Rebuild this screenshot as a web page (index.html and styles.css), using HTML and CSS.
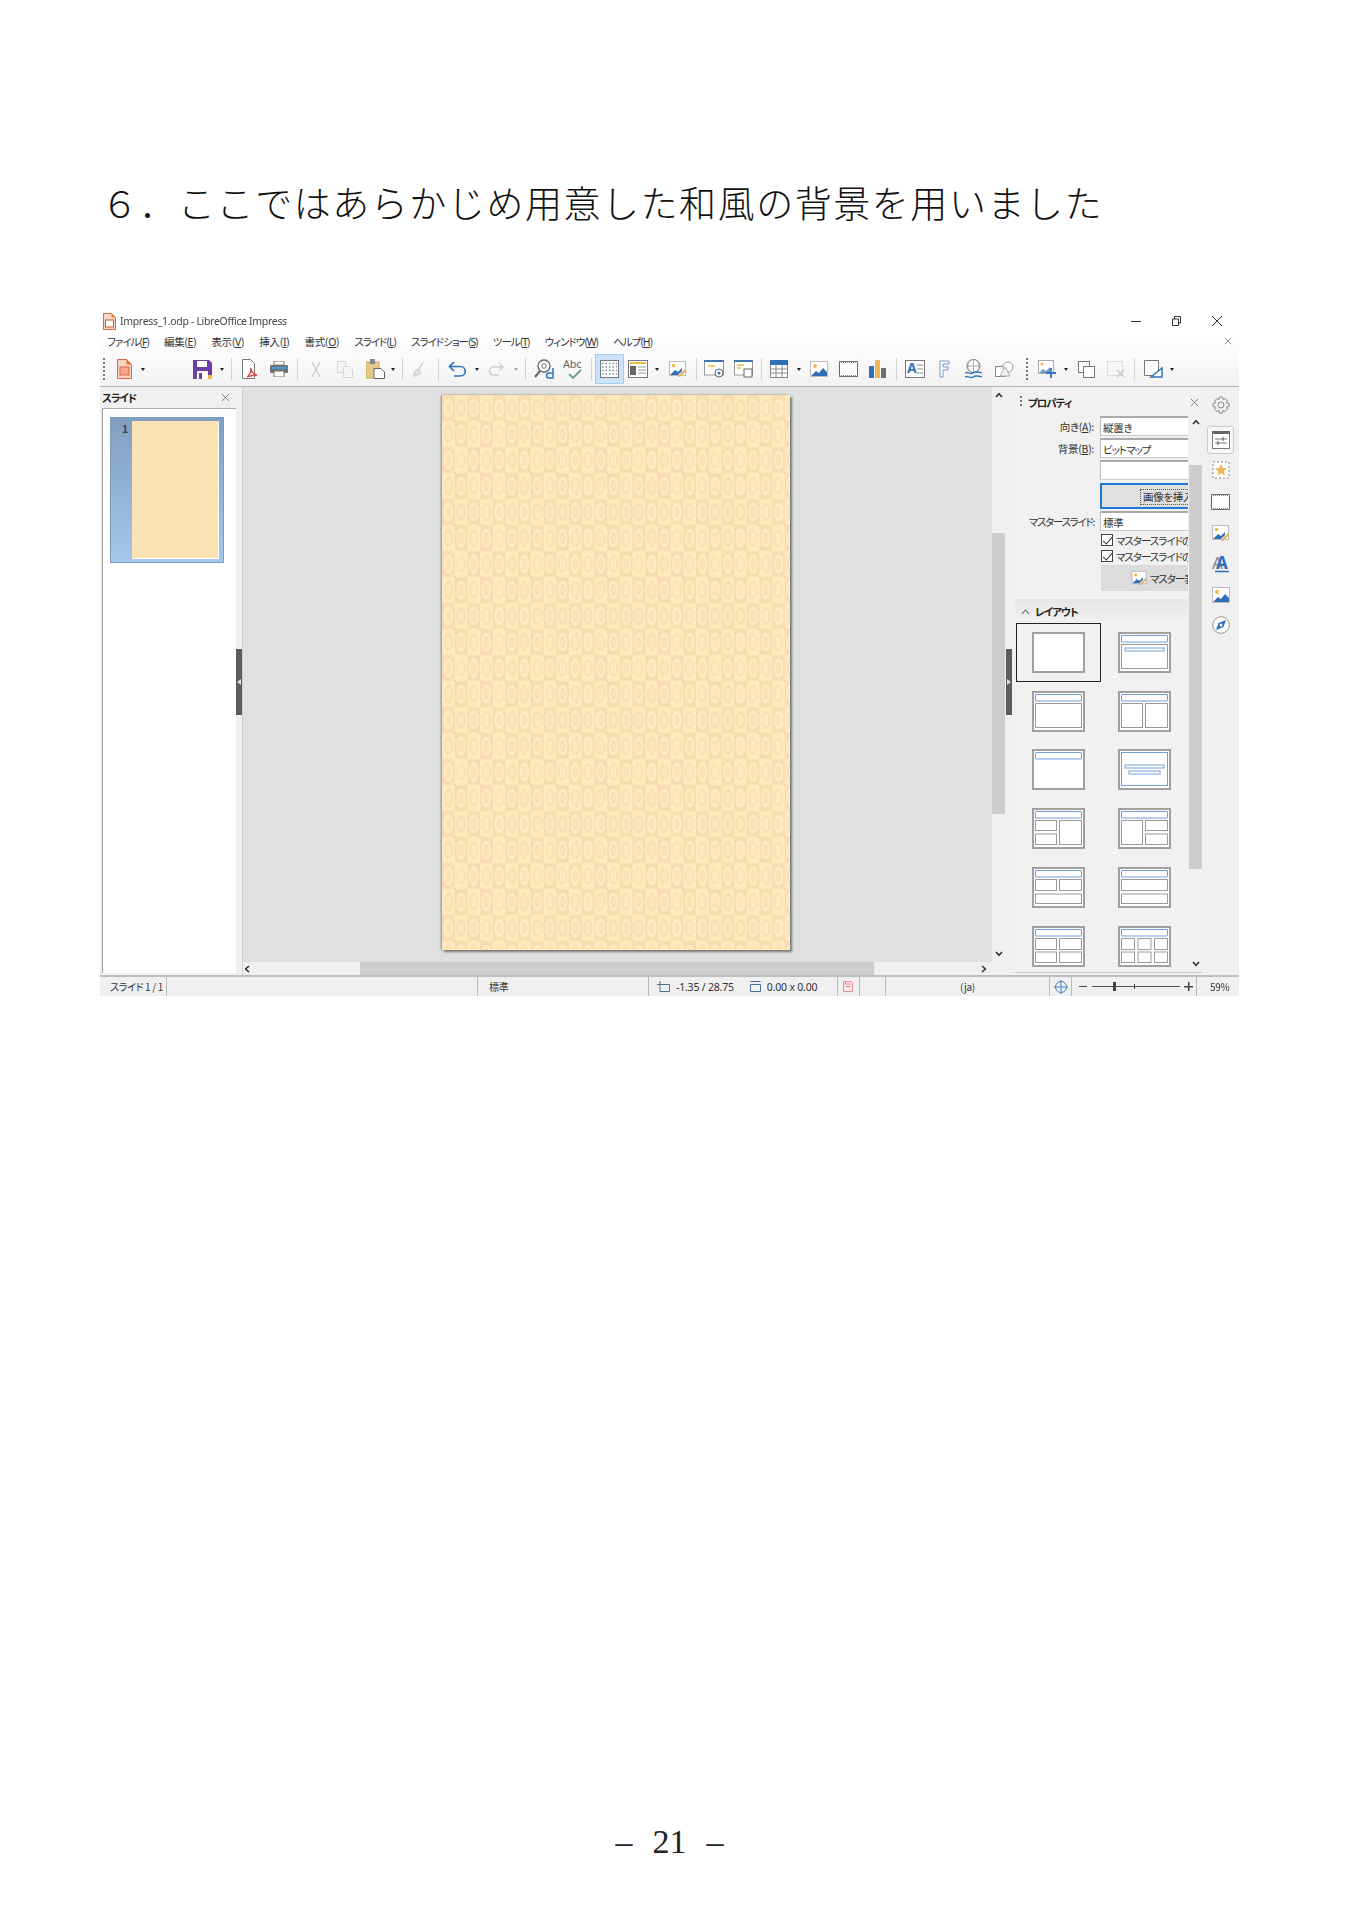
FILE: index.html
```html
<!DOCTYPE html>
<html lang="ja">
<head>
<meta charset="utf-8">
<title>ここではあらかじめ用意した和風の背景を用いました</title>
<link rel="stylesheet" href="styles.css">
</head>
<body>
<svg class="defs" width="0" height="0" aria-hidden="true">
  <defs>
    <pattern id="wafu" width="25.4" height="52" patternUnits="userSpaceOnUse">
      <rect width="25.4" height="52" fill="#feeabb"/>
      <rect x="0" y="0" width="12.7" height="26" fill="#fadcb2"/>
      <rect x="12.7" y="26" width="12.7" height="26" fill="#fadcb2"/>
      <g>
        <ellipse cx="6.35" cy="13" rx="4.800" ry="9.500" fill="#feedbf"/>
        <ellipse cx="6.35" cy="13" rx="2.800" ry="6" fill="#fbe0b5"/>
        <ellipse cx="6.35" cy="13" rx="1.200" ry="2.800" fill="#fde8ba"/>
        <ellipse cx="19.05" cy="13" rx="4.600" ry="9" fill="#fbdfb4"/>
        <ellipse cx="19.05" cy="13" rx="2.800" ry="6" fill="#feebbd"/>
        <ellipse cx="19.05" cy="13" rx="1.200" ry="2.800" fill="#fce5b8"/>
        <ellipse cx="6.35" cy="39" rx="4.600" ry="9" fill="#fbdfb4"/>
        <ellipse cx="6.35" cy="39" rx="2.800" ry="6" fill="#feebbd"/>
        <ellipse cx="6.35" cy="39" rx="1.200" ry="2.800" fill="#fce5b8"/>
        <ellipse cx="19.05" cy="39" rx="4.800" ry="9.500" fill="#feedbf"/>
        <ellipse cx="19.05" cy="39" rx="2.800" ry="6" fill="#fbe0b5"/>
        <ellipse cx="19.05" cy="39" rx="1.200" ry="2.800" fill="#fde8ba"/>
      </g>
      <circle cx="12.7" cy="26" r=".6" fill="#cdb48c"/>
    </pattern>
    <symbol id="chev" viewBox="0 0 8 6"><path d="M1 5l3-3.4L7 5" fill="none" stroke="#333" stroke-width="1.6"/></symbol>
    <symbol id="x" viewBox="0 0 10 10"><path d="M1 1l8 8M9 1l-8 8" fill="none" stroke="#777" stroke-width="1"/></symbol>
    <symbol id="pic" viewBox="0 0 18 18"><rect x=".5" y="1.5" width="17" height="15" fill="#fff" stroke="#bbb"/><circle cx="5" cy="6" r="2" fill="#f0b84c"/><path d="M1 16l5-5 3 2 4-5 4 4v4z" fill="#2f6fb5"/></symbol>
    <symbol id="film" viewBox="0 0 19 16"><rect x=".5" y=".5" width="18" height="15" fill="#fff" stroke="#666"/><path d="M0 1.2h19M0 14.8h19" stroke="#888" stroke-width="1.6" stroke-dasharray="1 1"/></symbol>
    <symbol id="pen" viewBox="0 0 18 16"><rect x=".5" y=".5" width="16" height="14" fill="#fff" stroke="#bbb"/><circle cx="4.5" cy="4.5" r="1.8" fill="#f0b84c"/><path d="M1 14l5-5 3 2 4-4v3l-4 4z" fill="#2f6fb5"/><path d="M9 15l7-7 1.500 1.500-7 7z" fill="#eeb057"/></symbol>
    <g id="lt"><rect class="lo" x="1" y="1" width="51" height="39"/></g>
    <g id="tt"><rect class="lb" x="3.500" y="3.500" width="46" height="6.500" rx=".5"/></g>
  </defs>
</svg>

<main class="page">
  <h1 class="heading">６．ここではあらかじめ用意した和風の背景を用いました</h1>

  <section class="app">
    <header class="titlebar">
      <svg class="appicon" width="13" height="17" viewBox="0 0 13 17"><path d="M.5.5h8l4 4v12H.5z" fill="#f6d9c6" stroke="#d2693f"/><path d="M8.500.5l4 4h-4z" fill="#e8813f"/><rect x="2.500" y="7" width="8" height="7" fill="#fff" stroke="#c9562e"/></svg>
      <span class="apptitle">Impress_1.odp - LibreOffice Impress</span>
      <div class="winctl">
        <svg width="10" height="10" viewBox="0 0 10 10"><path d="M0 5.500h10" stroke="#333"/></svg>
        <svg width="9" height="10" viewBox="0 0 9 10"><path d="M.5 3h6v6.500h-6zM2.500 3V.5h6V7H6.500" fill="none" stroke="#333"/></svg>
        <svg width="10" height="10" viewBox="0 0 10 10"><path d="M0 0l10 10M10 0L0 10" stroke="#333"/></svg>
      </div>
    </header>

    <nav class="menubar">
      <span class="kana">ファイル(<u>F</u>)</span>
      <span>編集(<u>E</u>)</span>
      <span>表示(<u>V</u>)</span>
      <span>挿入(<u>I</u>)</span>
      <span>書式(<u>O</u>)</span>
      <span class="kana">スライド(<u>L</u>)</span>
      <span class="kana">スライドショー(<u>S</u>)</span>
      <span class="kana">ツール(<u>T</u>)</span>
      <span class="kana">ウィンドウ(<u>W</u>)</span>
      <span class="kana">ヘルプ(<u>H</u>)</span>
      <svg class="menuclose" width="8" height="8"><use href="#x"/></svg>
    </nav>

    <div class="toolbar">
      <i class="grip ml3"></i>
      <svg class="ml12" width="15" height="20" viewBox="0 0 15 20"><path d="M.5.5h9l5 5v14H.5z" fill="#f9d3bd" stroke="#d8694a"/><path d="M9.500.5l5 5h-5z" fill="#e2683e"/><rect x="3" y="8" width="9" height="8" fill="#f3a78a" stroke="#d8694a"/></svg>
      <i class="dd ml9"></i>
      <svg class="ml48" width="19" height="19" viewBox="0 0 19 19"><path d="M0 0h16l3 3v16H0z" fill="#6b3fa5"/><rect x="4" y="1" width="10" height="6" fill="#fff"/><rect x="4" y="11" width="11" height="8" fill="#fff"/><rect x="6" y="13" width="3" height="6" fill="#6b3fa5"/><rect x="15" y="15" width="4" height="4" fill="#f0b84c"/></svg>
      <i class="dd ml8"></i>
      <i class="sep ml7"></i>
      <svg class="ml10" width="16" height="20" viewBox="0 0 16 20"><path d="M.5.5h8l4 4v15H.5z" fill="#fff" stroke="#777"/><path d="M5 18c3-2 4-6 4-9 0 4 2 6 6 7-4 0-7 1-10 2z" fill="none" stroke="#d8443c" stroke-width="1.300"/></svg>
      <svg class="ml12" width="18" height="16" viewBox="0 0 18 16"><rect x="4" y="0" width="10" height="4" fill="#fff" stroke="#777"/><rect x="0" y="4" width="18" height="8" rx="1" fill="#6d7478"/><rect x="2" y="6" width="14" height="2" fill="#4a9ad4"/><rect x="4" y="10" width="10" height="6" fill="#fff" stroke="#777"/></svg>
      <i class="sep ml9"></i>
      <svg class="ml12" width="12" height="15" viewBox="0 0 12 15"><path d="M2 0l8 15M10 0L2 15" stroke="#ccc" stroke-width="1.300"/></svg>
      <svg class="ml15" width="16" height="17" viewBox="0 0 16 17"><path d="M.5.500h8v11h-8z" fill="#f5f5f5" stroke="#d5d5d5"/><path d="M6.500 5.500h6l3 3v8h-9z" fill="#f5f5f5" stroke="#d5d5d5"/></svg>
      <svg class="ml13" width="19" height="20" viewBox="0 0 19 20"><rect x="0" y="3" width="13" height="16" fill="#e8c98a" stroke="#c9a35e"/><rect x="4" y="0" width="5" height="5" fill="#888"/><path d="M8 9.500h7l3.500 3.500v6.500H8z" fill="#fff" stroke="#666"/></svg>
      <i class="dd ml6"></i>
      <i class="sep ml7"></i>
      <svg class="ml10" width="12" height="15" viewBox="0 0 12 15"><path d="M10 1L5 8M1 14c0-4 2-6 4-6s3 2 2 3-4 3-6 3z" fill="#e4e4e4" stroke="#d2d2d2" stroke-width="1.500"/></svg>
      <i class="sep ml13"></i>
      <svg class="ml9" width="18" height="16" viewBox="0 0 18 16"><path d="M6 1L1.500 5.500 6 10M2 5.500h10c7 0 7 9.500 0 9.500H6" fill="none" stroke="#2f74bb" stroke-width="1.700"/></svg>
      <i class="dd ml9"></i>
      <svg class="ml9" width="16" height="14" viewBox="0 0 16 14"><path d="M11 1l4 4-4 4M15 5H6c-6 0-6 8 0 8h5" fill="none" stroke="#d0d0d0" stroke-width="1.400"/></svg>
      <i class="dd pale ml10"></i>
      <i class="sep ml7"></i>
      <svg class="ml8" width="20" height="20" viewBox="0 0 20 20"><circle cx="10" cy="7" r="6" fill="#fff" stroke="#666" stroke-width="1.300"/><path d="M6 12l-5 6" stroke="#666" stroke-width="2"/><circle cx="10" cy="7" r="2.300" fill="none" stroke="#777"/><path d="M19 9v10h-4a2.500 2.500 0 010-5h4" fill="none" stroke="#2f74bb" stroke-width="1.500"/></svg>
      <svg class="ml9" width="20" height="20" viewBox="0 0 20 20"><text class="abc" x="0" y="9">Abc</text><path d="M6 15l4 4 8-8" fill="none" stroke="#6aa58a" stroke-width="1.800"/></svg>
      <i class="sep ml8"></i>
      <span class="active ml3"><svg width="19" height="18" viewBox="0 0 19 18"><rect x=".5" y=".5" width="18" height="17" fill="#fff" stroke="#777"/><path d="M2 3.500h15M2 7h15M2 10.500h15M2 14h15" stroke="#7d8a9a" stroke-dasharray="1.500 2" stroke-width="1.400"/></svg></span>
      <svg class="ml4" width="20" height="18" viewBox="0 0 20 18"><rect x=".5" y=".5" width="19" height="17" fill="#fff" stroke="#777"/><rect x="2" y="2" width="16" height="2" fill="#f0b84c"/><rect x="2" y="6" width="6" height="9" fill="#666"/><path d="M10 7h8M10 10h8M10 13h8" stroke="#999"/></svg>
      <i class="dd ml7"></i>
      <svg class="ml10" width="18" height="16"><use href="#pen"/></svg>
      <i class="sep ml9"></i>
      <svg class="ml7" width="20" height="18" viewBox="0 0 20 18"><rect x=".5" y="1" width="19" height="14" fill="#fff" stroke="#999"/><rect x="0" y="0" width="20" height="2" fill="#4477ad"/><path d="M4 6h7" stroke="#f0b84c" stroke-width="1.500"/><circle cx="15" cy="13" r="4" fill="#fff" stroke="#666"/><circle cx="15" cy="13" r="1.500" fill="#2f74bb"/></svg>
      <svg class="ml10" width="19" height="18" viewBox="0 0 19 18"><rect x=".5" y="1" width="18" height="14" fill="#fff" stroke="#999"/><rect x="0" y="0" width="19" height="2" fill="#4477ad"/><path d="M3 5h7M3 8h4" stroke="#f0b84c" stroke-width="1.500"/><rect x="10" y="9" width="8" height="8" fill="#fff" stroke="#666"/></svg>
      <i class="sep ml8"></i>
      <svg class="ml8" width="18" height="18" viewBox="0 0 18 18"><rect x=".5" y=".5" width="17" height="17" fill="#fff" stroke="#888"/><rect x="0" y="0" width="18" height="5" fill="#2f6fb5"/><path d="M0 9h18M0 13h18M6 5v13M12 5v13" stroke="#888"/></svg>
      <i class="dd ml9"></i>
      <svg class="ml9" width="18" height="18"><use href="#pic"/></svg>
      <svg class="ml11" width="19" height="16"><use href="#film"/></svg>
      <svg class="ml11" width="17" height="18" viewBox="0 0 17 18"><rect x="0" y="6" width="5" height="12" fill="#2f6fb5"/><rect x="6" y="0" width="5" height="18" fill="#eeb65a"/><rect x="12" y="8" width="5" height="10" fill="#6d6d6d"/></svg>
      <i class="sep ml10"></i>
      <svg class="ml8" width="20" height="18" viewBox="0 0 20 18"><rect x=".5" y=".5" width="19" height="17" fill="#fff" stroke="#777"/><text class="boxa" x="2" y="13">A</text><path d="M12 5h6M12 9h6M12 13h6" stroke="#888"/></svg>
      <svg class="ml14" width="11" height="18" viewBox="0 0 11 18"><path d="M1 1h9v3H4v3h5v3H4v7H1z" fill="#fff" stroke="#6f97c2"/></svg>
      <svg class="ml15" width="17" height="20" viewBox="0 0 17 20"><circle cx="8.500" cy="7" r="6.500" fill="#fff" stroke="#777"/><path d="M2 7h13M8.500 1v12M4.500 2c-2 3-2 7 0 10M12.500 2c2 3 2 7 0 10" fill="none" stroke="#999" stroke-width=".8"/><path d="M0 14c3-2 5 2 8 0s6-1 9 0M0 18c3-2 5 2 8 0s6-1 9 0" fill="none" stroke="#2f74bb" stroke-width="1.300"/></svg>
      <svg class="ml13" width="19" height="17" viewBox="0 0 19 17"><rect x=".5" y="5.500" width="10" height="10" fill="#fff" stroke="#888"/><circle cx="13" cy="6" r="5" fill="#fff" stroke="#999"/><path d="M5 15l5-9 5 9z" fill="#f4f4f4" stroke="#aaa"/></svg>
      <i class="grip ml12"></i>
      <svg class="ml10" width="18" height="18" viewBox="0 0 18 18"><rect x=".5" y=".5" width="15" height="13" fill="#fff" stroke="#aaa"/><circle cx="4" cy="4" r="1.600" fill="#f0b84c"/><path d="M1 13l4-4 3 2 4-4v6z" fill="#6e9cc9"/><path d="M13 8v10M8 13h10" stroke="#2f74bb" stroke-width="1.800"/></svg>
      <i class="dd ml8"></i>
      <svg class="ml10" width="17" height="17" viewBox="0 0 17 17"><rect x=".5" y=".5" width="11" height="11" fill="#fff" stroke="#777"/><rect x="5.500" y="5.500" width="11" height="11" fill="#fff" stroke="#777"/></svg>
      <svg class="ml12" width="18" height="17" viewBox="0 0 18 17"><rect x=".5" y=".5" width="15" height="14" fill="#f7f7f7" stroke="#ddd"/><path d="M10 9l7 7M17 9l-7 7" stroke="#ccc" stroke-width="1.500"/></svg>
      <i class="sep ml9"></i>
      <svg class="ml9" width="19" height="18" viewBox="0 0 19 18"><path d="M.5.500h14v15H.5z" fill="#fff" stroke="#777"/><path d="M7 17l11-9v9z" fill="#fff" stroke="#2f74bb" stroke-width="1.500"/></svg>
      <i class="dd ml7"></i>
    </div>

    <div class="workspace">
      <aside class="slides">
        <div class="panelhead"><b class="kana">スライド</b><svg width="9" height="9"><use href="#x"/></svg></div>
        <div class="slidelist">
          <div class="thumb">
            <span class="thumbnum">1</span>
            <div class="thumbslide"></div>
          </div>
        </div>
      </aside>

      <div class="splitter"><span class="handle back"></span></div>

      <div class="center">
        <div class="centerrow">
          <div class="canvas">
            <div class="slide"><svg width="100%" height="100%"><rect width="100%" height="100%" fill="url(#wafu)"/></svg></div>
          </div>
          <div class="vscroll">
            <svg class="arrow" width="8" height="6"><use href="#chev"/></svg>
            <span class="vthumb"></span>
            <svg class="arrow down end" width="8" height="6"><use href="#chev"/></svg>
          </div>
        </div>
        <div class="hscroll">
          <svg class="arrow left" width="8" height="6"><use href="#chev"/></svg>
          <span class="hthumb"></span>
          <svg class="arrow right" width="8" height="6"><use href="#chev"/></svg>
        </div>
      </div>

      <div class="splitter two"><span class="handle"></span></div>

      <aside class="deck">
        <div class="deckhead"><i class="grip short"></i><b class="kana">プロパティ</b><svg width="9" height="9"><use href="#x"/></svg></div>
        <div class="deckbody">
          <div class="deckcontent">
            <div class="form">
              <label>向き(<u>A</u>):</label><div class="field">縦置き</div>
              <label>背景(<u>B</u>):</label><div class="field kana">ビットマップ</div>
              <span></span><div class="field"></div>
              <span></span><div class="insert"><span>画像を挿入...</span></div>
              <label class="kana">マスタースライド:</label><div class="field">標準</div>
              <span></span><div class="check kana"><i class="box"></i><span>マスタースライドの背景</span></div>
              <span></span><div class="check kana"><i class="box"></i><span>マスタースライドのオブジェクト</span></div>
              <span></span><div class="master kana"><svg width="17" height="14"><use href="#pen"/></svg><span>マスター表示</span></div>
            </div>
            <div class="section"><svg class="sechev" width="11" height="7" viewBox="0 0 8 6"><path d="M1 5l3-3.400L7 5" fill="none" stroke="#777"/></svg><b class="kana">レイアウト</b></div>
            <div class="layouts">
              <div class="cell selected"><svg class="lay" viewBox="0 0 53 41"><use href="#lt"/></svg></div>
              <div class="cell"><svg class="lay" viewBox="0 0 53 41"><use href="#lt"/><use href="#tt"/><rect class="lg" x="3.500" y="12.500" width="46" height="24"/><rect class="lb" x="7" y="16" width="39" height="3"/></svg></div>
              <div class="cell"><svg class="lay" viewBox="0 0 53 41"><use href="#lt"/><use href="#tt"/><rect class="lg" x="3.500" y="12.500" width="46" height="24"/></svg></div>
              <div class="cell"><svg class="lay" viewBox="0 0 53 41"><use href="#lt"/><use href="#tt"/><rect class="lg" x="3.500" y="12.500" width="21" height="24"/><rect class="lg" x="27.500" y="12.500" width="22" height="24"/></svg></div>
              <div class="cell"><svg class="lay" viewBox="0 0 53 41"><use href="#lt"/><use href="#tt"/></svg></div>
              <div class="cell"><svg class="lay" viewBox="0 0 53 41"><use href="#lt"/><rect class="lb" x="3.500" y="3.500" width="46" height="33"/><rect class="lb" x="7" y="16" width="39" height="3"/><rect class="lb" x="11" y="22" width="31" height="3"/></svg></div>
              <div class="cell"><svg class="lay" viewBox="0 0 53 41"><use href="#lt"/><use href="#tt"/><rect class="lg" x="3.500" y="12.500" width="21" height="10"/><rect class="lg" x="3.500" y="26" width="21" height="10.500"/><rect class="lg" x="27.500" y="12.500" width="22" height="24"/></svg></div>
              <div class="cell"><svg class="lay" viewBox="0 0 53 41"><use href="#lt"/><use href="#tt"/><rect class="lg" x="3.500" y="12.500" width="21" height="24"/><rect class="lg" x="27.500" y="12.500" width="22" height="10"/><rect class="lg" x="27.500" y="26" width="22" height="10.500"/></svg></div>
              <div class="cell"><svg class="lay" viewBox="0 0 53 41"><use href="#lt"/><use href="#tt"/><rect class="lg" x="3.500" y="12.500" width="21" height="11"/><rect class="lg" x="27.500" y="12.500" width="22" height="11"/><rect class="lg" x="3.500" y="27" width="46" height="9.500"/></svg></div>
              <div class="cell"><svg class="lay" viewBox="0 0 53 41"><use href="#lt"/><use href="#tt"/><rect class="lg" x="3.500" y="12.500" width="46" height="11"/><rect class="lg" x="3.500" y="27" width="46" height="9.500"/></svg></div>
              <div class="cell"><svg class="lay" viewBox="0 0 53 41"><use href="#lt"/><use href="#tt"/><rect class="lg" x="3.500" y="12.500" width="21" height="11"/><rect class="lg" x="27.500" y="12.500" width="22" height="11"/><rect class="lg" x="3.500" y="26" width="21" height="10.500"/><rect class="lg" x="27.500" y="26" width="22" height="10.500"/></svg></div>
              <div class="cell"><svg class="lay" viewBox="0 0 53 41"><use href="#lt"/><use href="#tt"/><rect class="lg" x="3.500" y="12.500" width="13" height="11"/><rect class="lg" x="20" y="12.500" width="13" height="11"/><rect class="lg" x="36.500" y="12.500" width="13" height="11"/><rect class="lg" x="3.500" y="26" width="13" height="10.500"/><rect class="lg" x="20" y="26" width="13" height="10.500"/><rect class="lg" x="36.500" y="26" width="13" height="10.500"/></svg></div>
            </div>
          </div>
          <div class="deckscroll">
            <svg class="arrow" width="8" height="6"><use href="#chev"/></svg>
            <span class="dthumb"></span>
            <svg class="arrow down end" width="8" height="6"><use href="#chev"/></svg>
          </div>
        </div>
      </aside>

      <div class="tabs">
        <span class="tab"><svg width="20" height="20" viewBox="0 0 20 20"><path d="M8.500 1h3l.5 2.500 2-1 2.500 2.500-1 2 2.500.5v3l-2.500.5 1 2L14 15.500l-2-1-.5 2.500h-3l-.5-2.500-2 1L3.500 13l1-2L2 10.500v-3L4.500 7l-1-2L6 2.500l2 1z" fill="none" stroke="#8a8a8a"/><circle cx="10" cy="9" r="3" fill="none" stroke="#8a8a8a"/></svg></span>
        <span class="tab on"><svg width="18" height="18" viewBox="0 0 18 18"><rect x=".5" y=".5" width="17" height="17" fill="#fff" stroke="#777"/><rect x="0" y="0" width="18" height="3" fill="#666"/><path d="M3 8h12M3 12h12" stroke="#777"/><path d="M11 6v4M6 10v4" stroke="#555"/></svg></span>
        <span class="tab t1"><svg width="18" height="18" viewBox="0 0 18 18"><rect x="1" y="1" width="16" height="16" fill="#fff" stroke="#888" stroke-dasharray="2 2"/><path d="M9 3l1.800 4 4.200.4-3.200 2.800 1 4.300L9 12.200l-3.800 2.300 1-4.300L3 7.400 7.200 7z" fill="#eeb65a"/></svg></span>
        <span class="tab t2"><svg width="19" height="16"><use href="#film"/></svg></span>
        <span class="tab t1"><svg width="18" height="16"><use href="#pen"/></svg></span>
        <span class="tab"><svg width="18" height="19" viewBox="0 0 18 19"><text class="aa" x="0" y="15">A</text><text class="ab" x="4" y="15">A</text><path d="M3 17.500h14" stroke="#2f6fb5" stroke-width="1.500"/></svg></span>
        <span class="tab t2"><svg width="18" height="18"><use href="#pic"/></svg></span>
        <span class="tab"><svg width="18" height="18" viewBox="0 0 18 18"><circle cx="9" cy="9" r="8.300" fill="#fff" stroke="#999"/><path d="M14 4l-2.500 7L4 14l2.500-7z" fill="#2f6fb5"/><circle cx="9" cy="9" r="1.500" fill="#fff"/></svg></span>
      </div>
    </div>

    <footer class="status">
      <span class="st s1">スライド 1 / 1</span>
      <span class="st s2"></span>
      <span class="st s3">標準</span>
      <span class="st s4">
        <svg width="13" height="11" viewBox="0 0 13 11"><path d="M3 3.500h9.500v7H3zM0 3.500h3M3 0v3.500" fill="none" stroke="#4a6f96"/></svg><span class="pos">-1.35 / 28.75</span>
        <svg class="szi" width="12" height="11" viewBox="0 0 12 11"><path d="M1.500 3.500h10v7h-10zM1.500 .5h10" fill="none" stroke="#4a6f96"/></svg><span class="sz">0.00 x 0.00</span>
      </span>
      <span class="st s5"><svg width="10" height="11" viewBox="0 0 10 11"><path d="M.5.500h8l1 1v9H.5z" fill="#fde6e8" stroke="#ec8c9c"/><path d="M2.500 5.500h5M2.500 1v2h5" fill="none" stroke="#ec8c9c"/></svg></span>
      <span class="st s6"></span>
      <span class="st s7">(ja)</span>
      <span class="st s8"><svg width="14" height="14" viewBox="0 0 14 14"><circle cx="7" cy="7" r="5.500" fill="none" stroke="#4a86c2"/><path d="M7 0v14M0 7h14" stroke="#4a86c2"/></svg></span>
      <span class="st s9">
        <i class="zm"></i>
        <span class="track"><i class="knob"></i><i class="tick"></i></span>
        <i class="zp"></i>
      </span>
      <span class="st s10">59%</span>
    </footer>
  </section>

  <footer class="pageno"><span>–</span><span>21</span><span>–</span></footer>
</main>
</body>
</html>
```

FILE: styles.css
```css
* { box-sizing: border-box; }
html, body { margin: 0; padding: 0; background: #fff; }
body { font-family: "Noto Sans CJK JP", "Noto Sans", sans-serif; overflow: hidden; }
.defs { position: absolute; }
svg { display: block; flex: none; }
i { font-style: normal; }

.page { height: 1915px; padding: 178px 110px 0 100px; display: flex; flex-direction: column; }
.heading { margin: 0 0 0 1px; font-size: 37px; line-height: 48px; font-weight: 300; letter-spacing: 1.54px; color: #111; white-space: nowrap; }
.pageno { margin-top: auto; margin-bottom: 53px; display: flex; justify-content: center; gap: 20px; font: 34px/40px "Liberation Serif", serif; color: #222; }

.app { margin-top: 85px; height: 685px; width: 1139px; display: flex; flex-direction: column; font-size: 10.5px; color: #333; font-feature-settings: "palt"; letter-spacing: -.3px; filter: blur(.3px); }
.kana { letter-spacing: -1px; }

.titlebar { height: 22px; display: flex; align-items: center; padding: 0 17px 2px 3px; }
.apptitle { margin-left: 4px; font: 10.500px "Noto Sans", sans-serif; letter-spacing: -.32px; color: #444; }
.winctl { margin-left: auto; display: flex; align-items: center; gap: 31px; }

.menubar { height: 20px; display: flex; align-items: center; gap: 15px; padding: 0 7px 4px; background: linear-gradient(#fff, #fafafa); white-space: nowrap; }
.menubar u { font-family: "Noto Sans", sans-serif; }
.menuclose { margin-left: auto; }

.toolbar { height: 34px; flex: none; display: flex; align-items: center; padding-bottom: 1px; background: linear-gradient(#fbfbfb, #f2f2f2); border-bottom: 1px solid #b4b4b4; }
.grip { width: 2px; height: 22px; background: repeating-linear-gradient(#777 0 2px, transparent 2px 4px); }
.grip.short { height: 12px; margin-right: 6px; }
.dd { width: 0; height: 0; border: 2.500px solid transparent; border-top: 3px solid #222; border-bottom: 0; }
.dd.pale { border-top-color: #aaa; }
.sep { width: 1px; height: 22px; background: #d2d2d2; }
.active { width: 29px; height: 30px; display: flex; align-items: center; justify-content: center; background: #cce3f7; border: 1px solid #a6cdf0; }
.abc { font: 11px "Noto Sans", sans-serif; fill: #666; }
.boxa { font: bold 14px "Noto Sans", sans-serif; fill: #2f74bb; }
.aa { font: 17px "Noto Sans", sans-serif; fill: #888; }
.ab { font: bold 17px "Noto Sans", sans-serif; fill: #2f6fb5; }
.ml3 { margin-left: 3px; } .ml4 { margin-left: 4px; } .ml6 { margin-left: 6px; } .ml7 { margin-left: 7px; }
.ml8 { margin-left: 8px; } .ml9 { margin-left: 9px; } .ml10 { margin-left: 10px; } .ml11 { margin-left: 11px; }
.ml12 { margin-left: 12px; } .ml13 { margin-left: 13px; } .ml14 { margin-left: 14px; } .ml15 { margin-left: 15px; }
.ml48 { margin-left: 48px; }

.workspace { flex: 1; min-height: 0; display: flex; background: #f0f0f0; }

.slides { width: 136px; display: flex; flex-direction: column; }
.panelhead { height: 22px; flex: none; margin-left: 2px; padding: 0 6px 0 0; display: flex; align-items: center; justify-content: space-between; border-bottom: 1px solid #b0b0b0; }
.panelhead b { color: #222; }
.slidelist { flex: 1; margin: 0 0 2px 2px; background: #fff; border-left: 1px solid #999; padding: 8px 0 0 7px; }
.thumb { width: 114px; height: 146px; display: flex; padding: 3px 4px 3px 0; border: 1px solid #7c9cbd; background: linear-gradient(#809fc0, #a6c7e8); }
.thumbnum { width: 21px; padding: 0 4px 0 0; text-align: right; color: #444; font-weight: 700; }
.thumbslide { width: 87px; height: 138px; background: #fbe3b6; border-right: 1px solid #fff; border-bottom: 1px solid #fff; }

.splitter { width: 7px; flex: none; display: flex; align-items: flex-start; background: #f0f0f0; border-right: 1px solid #cfcfcf; }
.handle { margin-top: 262px; width: 6px; height: 66px; background: #5c5c5c; position: relative; }
.handle::after { content: ""; position: absolute; left: 1px; top: 30px; border: 3px solid transparent; border-left: 4px solid #ddd; border-right: 0; }
.handle.back::after { border-left: 0; border-right: 4px solid #ddd; }
.splitter.two { margin-left: 1px; border-right: 0; border-left: 0; }

.center { width: 762px; flex: none; display: flex; flex-direction: column; }
.centerrow { flex: 1; min-height: 0; display: flex; }
.canvas { flex: 1; background: #e0e0e0; display: flex; justify-content: center; padding: 8px 4px 0 0; }
.slide { width: 348px; height: 555px; box-shadow: -1px 0 2px #888, 2px 2px 2px #777; }
.vscroll { width: 13px; display: flex; flex-direction: column; align-items: center; background: #f0f0f0; padding-top: 5px; }
.vthumb { width: 13px; height: 281px; margin-top: 135px; background: #cdcdcd; }
.end { margin-top: auto; margin-bottom: 5px; }
.arrow { flex: none; }
.down { transform: rotate(180deg); }
.left { transform: rotate(-90deg); }
.right { transform: rotate(90deg); }
.hscroll { height: 13px; flex: none; display: flex; align-items: center; background: #f0f0f0; padding: 0 17px 0 0; }
.hscroll .left { margin-left: 0; }
.hthumb { width: 514px; height: 13px; margin-left: 109px; background: #cdcdcd; }
.hscroll .right { margin-left: auto; margin-right: 0; }

.deck { width: 187px; flex: none; margin-left: 2px; margin-bottom: 2px; display: flex; flex-direction: column; background: #f1f1f1; border-bottom: 1px solid #ccc; }
.deckhead { height: 28px; flex: none; display: flex; align-items: center; padding: 2px 3px 0 5px; }
.deckhead b { color: #222; flex: 1; }
.deckbody { flex: 1; min-height: 0; display: flex; }
.deckcontent { width: 173px; overflow: hidden; }
.form { display: grid; grid-template-columns: 85px 88px; grid-auto-rows: auto; row-gap: 2px; padding-top: 1px; }
.form label { align-self: center; text-align: right; padding-right: 6px; white-space: nowrap; color: #333; }
.form label.kana { letter-spacing: -1.3px; }
.field { height: 20px; padding: 2px 0 0 2px; line-height: 16px; background: #fff; border-top: 2px solid #aaa; border-left: 1px solid #bbb; border-bottom: 1px solid #ccc; white-space: nowrap; overflow: hidden; }
.insert { height: 26px; margin-top: 1px; padding: 4px 0 0 38px; white-space: nowrap; overflow: hidden; background: #e0e0e0; border: 2px solid #1f78d6; border-right: 0; }
.insert span { display: inline-block; border: 1px dotted #555; padding: 0 2px; line-height: 14px; }
.check { height: 14px; display: flex; align-items: center; gap: 3px; padding-left: 1px; white-space: nowrap; overflow: hidden; }
.box { width: 12px; height: 12px; flex: none; background: #fff; border: 1px solid #444; position: relative; }
.box::after { content: ""; position: absolute; left: 3px; top: 0; width: 4px; height: 8px; border: solid #333; border-width: 0 1.300px 1.300px 0; transform: rotate(40deg); }
.master { height: 26px; margin-left: 1px; display: flex; align-items: center; gap: 2px; padding-left: 30px; background: #dcdcdc; white-space: nowrap; overflow: hidden; }
.section { height: 24px; margin-top: 8px; display: flex; align-items: center; gap: 4px; padding-left: 5px; background: linear-gradient(#e6e6e6, #f1f1f1); }
.section b { color: #222; }
.layouts { display: grid; grid-template-columns: 85px 86px; grid-auto-rows: 58.800px; padding-left: 1px; }
.cell { display: flex; align-items: center; justify-content: center; }
.cell.selected { border: 1.500px solid #222; }
.lay { width: 53px; height: 41px; }
.lo { fill: #fff; stroke: #a0a0a0; stroke-width: 2; }
.lg { fill: #fff; stroke: #9a9a9a; }
.lb { fill: #fff; stroke: #6f9fd6; }
.deckscroll { width: 13px; margin-left: 1px; display: flex; flex-direction: column; align-items: center; padding-top: 4px; margin-top: 0; }
.dthumb { width: 13px; height: 404px; margin-top: 40px; background: #cdcdcd; }

.tabs { flex: 1; display: flex; flex-direction: column; align-items: center; padding-top: 4px; background: #f0f0f0; }
.tab { width: 27px; height: 30px; flex: none; display: flex; align-items: center; justify-content: center; }
.tab.on { height: 28px; margin-top: 5px; background: #f7f7f7; border: 1px solid #c9c9c9; border-radius: 3px; }
.t2 { margin-top: 2px; }
.t1 { margin-top: 1px; }

.status { height: 21px; flex: none; display: flex; align-items: stretch; background: #f0f0f0; border-top: 2px solid #bdbdbd; white-space: nowrap; font-size: 10px; }
.st { display: flex; align-items: center; flex: none; border-right: 1px solid #bbb; }
.s1 { width: 67px; padding-left: 10px; }
.s2 { width: 311px; }
.s3 { width: 171px; padding-left: 11px; }
.s4 { width: 189px; padding-left: 8px; }
.s5 { width: 22px; padding-left: 5px; }
.s6 { width: 26px; }
.s7 { width: 164px; justify-content: center; }
.s8 { width: 22px; padding-left: 4px; }
.s9 { width: 125px; padding-left: 7px; }
.s10 { width: 43px; border: 0; padding-left: 13px; }
.pos, .sz { font-family: "Noto Sans", sans-serif; font-size: 10.500px; letter-spacing: -.2px; }
.pos { margin-left: 6px; }
.szi { margin-left: 15px; }
.sz { margin-left: 6px; }
.zm { width: 8px; height: 1.500px; background: #444; flex: none; }
.zp { width: 9px; height: 9px; flex: none; background: linear-gradient(#444, #444) center/9px 1.500px no-repeat, linear-gradient(#444, #444) center/1.500px 9px no-repeat; }
.track { width: 88px; height: 1px; margin: 0 4px 0 5px; background: #555; position: relative; flex: none; }
.knob { position: absolute; left: 21px; top: -4px; width: 3px; height: 9px; background: #444; }
.tick { position: absolute; left: 42px; top: -2px; width: 1px; height: 5px; background: #444; }
```
